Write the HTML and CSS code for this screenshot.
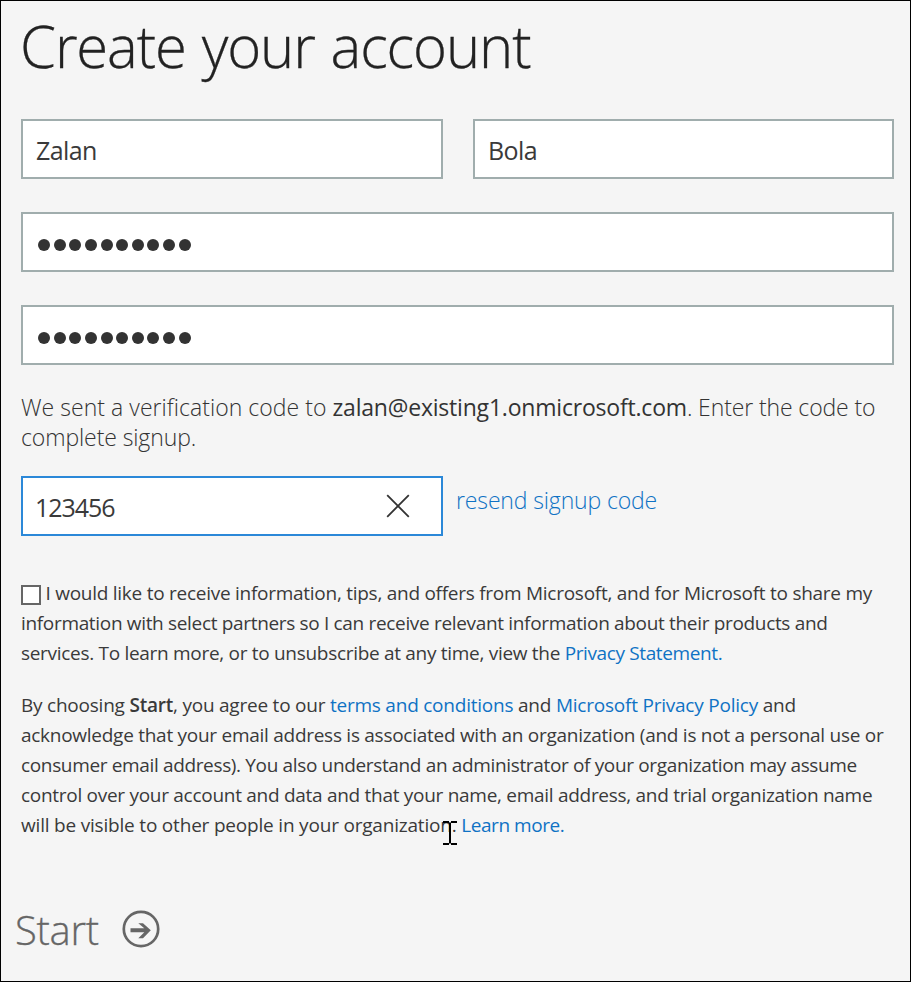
FILE: index.html
```
<!DOCTYPE html>
<html lang="en">
<head>
<meta charset="utf-8">
<title>Create your account</title>
<link rel="stylesheet" href="styles.css">
</head>
<body>
<main class="page">
  <h1 class="title">Create your account</h1>
  <div class="fields">
    <div class="names">
      <div class="field">Zalan</div>
      <div class="field">Bola</div>
    </div>
    <div class="field dots"><i></i><i></i><i></i><i></i><i></i><i></i><i></i><i></i><i></i><i></i></div>
    <div class="field dots"><i></i><i></i><i></i><i></i><i></i><i></i><i></i><i></i><i></i><i></i></div>
  </div>
  <p class="sent"><span class="line"><span class="sent-lead">We sent a verification code to </span><b>zalan@existing1.onmicrosoft.com</b><span class="sent-tail">. Enter the code to</span></span> <span class="line">complete signup.</span></p>
  <div class="code-row">
    <div class="field code"><span>123456</span>
      <svg class="clear" width="24" height="24" viewBox="0 0 24 24"><path d="M1.2 1.2 22.8 22.8M22.8 1.2 1.2 22.8"/></svg>
    </div>
    <a class="resend">resend signup code</a>
  </div>
  <p class="legal offers"><span class="line o1"><span class="check"></span>I would like to receive information, tips, and offers from Microsoft, and for Microsoft to share my</span> <span class="line o2">information with select partners so I can receive relevant information about their products and</span> <span class="line o3">services. To learn more, or to unsubscribe at any time, view the <a class="privacy">Privacy Statement.</a></span></p>
  <p class="legal terms"><span class="line t1">By choosing <b>Start</b>, you agree to our <a>terms and conditions</a> and <a>Microsoft Privacy Policy</a> and</span> <span class="line t2">acknowledge that your email address is associated with an organization (and is not a personal use or</span> <span class="line t3">consumer email address). You also understand an administrator of your organization may assume</span> <span class="line t4">control over your account and data and that your name, email address, and trial organization name</span> <span class="line t5">will be visible to other people in your organization. <a class="learn">Learn more.</a></span></p>
  <div class="start">
    <span>Start</span>
    <svg width="38" height="38" viewBox="0 0 38 38"><circle cx="19" cy="19" r="17.2"/><path d="M8.5 18.2H22.3L16.3 13.2H21L28.8 20.2 21 28.2H16.3L22.3 22.2H8.5Z"/></svg>
  </div>
  <svg class="cursor" width="14" height="26" viewBox="0 0 14 26"><path d="M0 1H6V3H0ZM8 1H14V3H8ZM6 2.5H8V23.5H6ZM0 23H6V25H0ZM8 23H14V25H8Z"/></svg>
</main>
</body>
</html>
```
FILE: styles.css
```
* { box-sizing: border-box; }
body { margin: 0; font-family: "Open Sans", sans-serif; color: #333; background: #f5f5f5; }
.page { position: relative; width: 911px; height: 982px; padding: 5px 16px 0 20px; border: 1px solid #000; background: #f5f5f5; overflow: hidden; }
.title { margin: 0 0 33px -1px; font-size: 58px; font-weight: 300; line-height: 80px; letter-spacing: -1.12px; word-spacing: 2px; color: #222; white-space: nowrap; -webkit-text-stroke: .3px #222; }
.fields { display: flex; flex-direction: column; gap: 33px; }
.names { display: grid; grid-template-columns: 422px 421px; gap: 30px; }
.field { height: 60px; padding: 0 13px; border: 2px solid #a0adad; background: #fff; font-size: 25px; font-weight: 400; line-height: 59px; letter-spacing: -.6px; color: #3a3a3a; }
.dots { display: flex; gap: 3.65px; padding: 25px 15px 0; }
.dots i { width: 12px; height: 12px; border-radius: 50%; background: #333; }
.line { display: block; white-space: nowrap; }
.sent { margin: 27px 0 24px; font-size: 23px; font-weight: 300; line-height: 30px; letter-spacing: -.1px; }
.sent-lead { letter-spacing: .04px; }
.sent b { font-weight: 500; letter-spacing: -.2px; }
.sent-tail { letter-spacing: -.12px; }
.code-row { display: flex; gap: 13px; }
.code { display: flex; justify-content: space-between; width: 422px; padding: 0 31px 0 12px; border-color: #2b88d8; letter-spacing: -1.05px; }
.clear { margin-top: 16px; fill: none; stroke: #333; stroke-width: 1.8; }
a { color: #0f72c4; }
.resend { font-size: 23px; font-weight: 300; line-height: 49px; letter-spacing: -.14px; }
.legal { margin: 42px 0 0; font-size: 19px; font-weight: 400; line-height: 30px; color: #3a3a3a; }
.check { display: inline-block; width: 20px; height: 20px; margin-right: 4.5px; vertical-align: -5px; border: 2px solid #666; background: #fff; }
.o1 { letter-spacing: -.265px; }
.o2 { letter-spacing: -.33px; }
.o3 { letter-spacing: -.3px; }
.privacy { letter-spacing: -.38px; }
.terms { margin-top: 22px; }
.terms b { font-weight: 600; }
.t1 { letter-spacing: -.225px; }
.t2 { letter-spacing: -.27px; }
.t3 { letter-spacing: -.35px; }
.t4 { letter-spacing: -.285px; }
.t5 { letter-spacing: -.195px; }
.learn { letter-spacing: -.45px; }
.start { display: flex; align-items: flex-start; gap: 22px; margin: 60px 0 0 -6px; color: #666; font-size: 40px; font-weight: 300; line-height: 60px; letter-spacing: -.3px; -webkit-text-stroke: .3px #666; }
.start svg { margin: 10px 0 0 1px; }
.start circle { fill: none; stroke: #666; stroke-width: 2.7; }
.start path { fill: #666; }
.cursor { position: absolute; left: 442px; top: 819px; fill: #000; }
```
